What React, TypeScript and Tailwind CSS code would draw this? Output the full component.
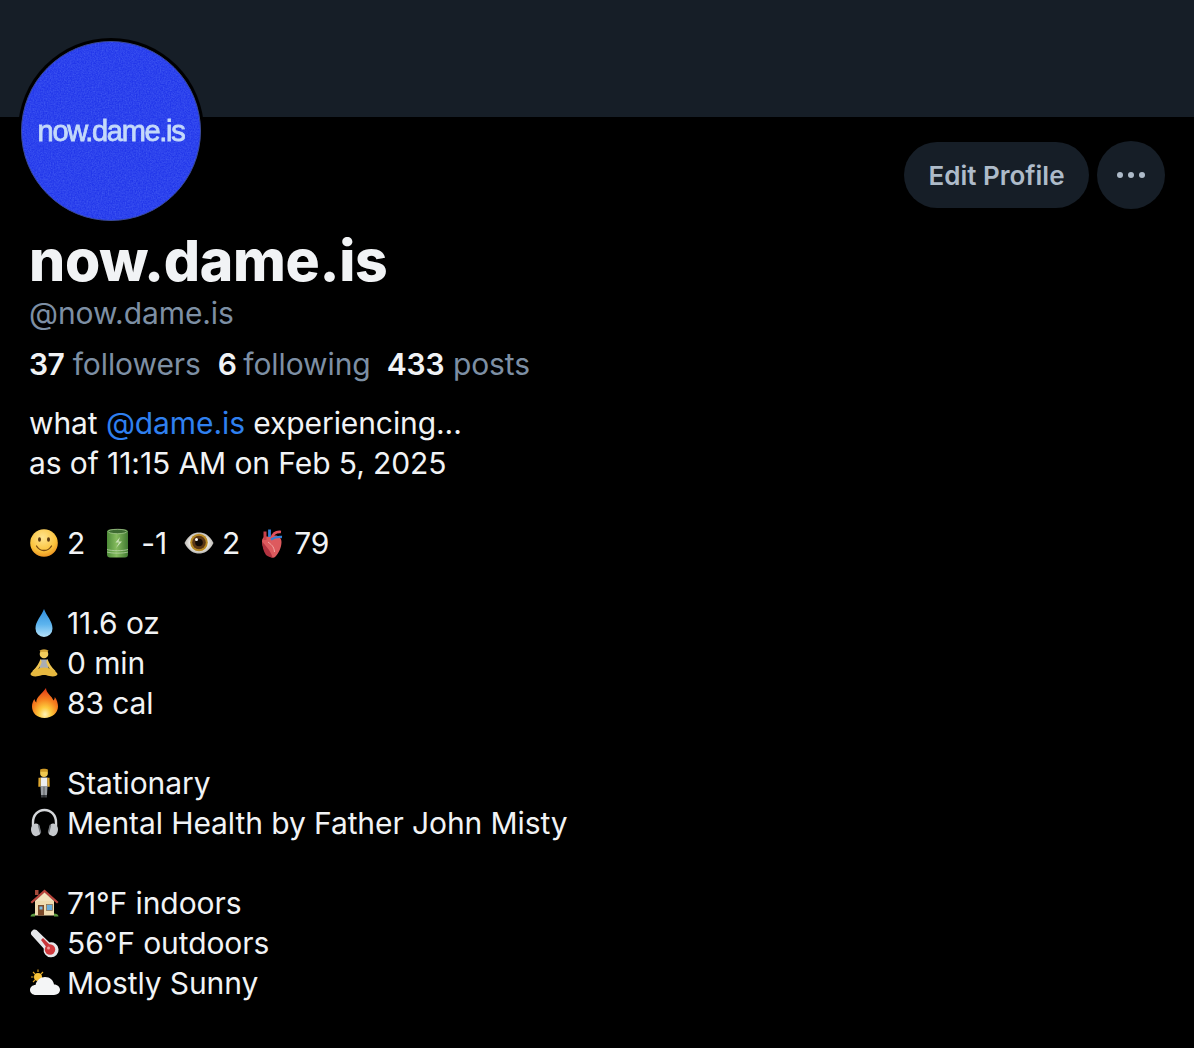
import * as React from 'react';

const Smile = () => (
  <svg viewBox="0 0 30 30" className="w-[30px] h-[30px]">
    <defs>
      <radialGradient id="smile" cx="45%" cy="30%" r="75%">
        <stop offset="0%" stopColor="#ffe48f" />
        <stop offset="65%" stopColor="#fbc33c" />
        <stop offset="100%" stopColor="#e98a1c" />
      </radialGradient>
    </defs>
    <circle cx="14" cy="15" r="13.800" fill="url(#smile)" />
    <ellipse cx="9.500" cy="11.500" rx="1.500" ry="2.200" fill="#5d3a12" />
    <ellipse cx="18.500" cy="11.500" rx="1.500" ry="2.200" fill="#5d3a12" />
    <path d="M6.500 18c2 3.500 4.800 4.500 7.500 4.500s5.500-1 7.500-4.500" fill="none" stroke="#7a4a12" strokeWidth="1.300" strokeLinecap="round" />
  </svg>
);

const Battery = () => (
  <svg viewBox="0 0 30 30" className="w-[30px] h-[30px]">
    <defs>
      <linearGradient id="batt" x1="0" x2="1" y1="0" y2="0">
        <stop offset="0%" stopColor="#4d8b38" />
        <stop offset="45%" stopColor="#85bb5e" />
        <stop offset="100%" stopColor="#427a32" />
      </linearGradient>
    </defs>
    <rect x="4" y="1.500" width="21" height="28" rx="3" fill="url(#batt)" />
    <ellipse cx="14.500" cy="3.500" rx="9.500" ry="2.200" fill="#3d6b31" stroke="#a5c98e" strokeWidth="0.800" />
    <path d="M17 9l-4.500 5.500h3.500l-3 5.500 6-6.500h-3.500z" fill="#d8eac8" opacity="0.850" />
    <path d="M4 21.500c4 1.500 17 1.500 21 0M4 24c4 1.500 17 1.500 21 0" fill="none" stroke="#c6dcb4" strokeWidth="0.700" />
  </svg>
);

const Eye = () => (
  <svg viewBox="0 0 30 30" className="w-[30px] h-[30px]">
    <defs>
      <radialGradient id="sclera" cx="50%" cy="50%" r="55%">
        <stop offset="55%" stopColor="#f3f1ec" />
        <stop offset="100%" stopColor="#a8a6a2" />
      </radialGradient>
    </defs>
    <path d="M0.500 15C5 6.500 10 4.500 15 4.500s10 2 14.500 10.500C25 23.500 20 25.500 15 25.500S5 23.500 0.500 15z" fill="url(#sclera)" />
    <circle cx="15" cy="14.500" r="8.800" fill="#b98a24" />
    <circle cx="15" cy="14.500" r="6.800" fill="#5a3716" />
    <circle cx="15" cy="14.500" r="3.800" fill="#120a05" />
    <circle cx="12.500" cy="11.500" r="1.500" fill="#ffffff" />
  </svg>
);

const Heart = () => (
  <svg viewBox="0 0 30 30" className="w-[30px] h-[30px]">
    <path d="M5 13c0-3 2.500-5 5-4.500 2 .4 4 .4 6-.5 4-1.500 8.500 1 8.500 6 0 5.500-3 11.500-6 14.500-1.500 1.500-3 1.500-5 .5C9 26.500 5 19 5 13z" fill="#dd5a5e" />
    <path d="M9 27c-2.500-3.500-4-9-3.500-13 3 4 8 8 10 15.500-2.500 0-4.500-1-6.500-2.500z" fill="#b23340" />
    <path d="M8 12V3.500" stroke="#c8404a" strokeWidth="3" />
    <path d="M12.500 9V1.500" stroke="#2f7fd6" strokeWidth="2.800" />
    <path d="M15 10c1-5 4-6.500 9-6" fill="none" stroke="#e0505c" strokeWidth="2.600" />
    <path d="M14 11.500c3-2 6-3 11-2.500" fill="none" stroke="#2f7fd6" strokeWidth="2.400" />
    <path d="M11 14c3 2.500 6 4 6.500 10" fill="none" stroke="#f3a8a4" strokeWidth="1" />
  </svg>
);

const Drop = () => (
  <svg viewBox="0 0 30 30" className="w-[30px] h-[30px]">
    <defs>
      <linearGradient id="drop" x1="0" x2="0" y1="0" y2="1">
        <stop offset="0%" stopColor="#2f8ede" />
        <stop offset="55%" stopColor="#5db4ee" />
        <stop offset="100%" stopColor="#b6e2f9" />
      </linearGradient>
    </defs>
    <path d="M14 1c2.500 7 8.500 12 8.500 19.500a8.500 8.500 0 0 1-17 0C5.500 13 11.500 8 14 1z" fill="url(#drop)" />
  </svg>
);

const Yoga = () => (
  <svg viewBox="0 0 30 30" className="w-[30px] h-[30px]">
    <circle cx="14" cy="6" r="4.300" fill="#f3cd5c" />
    <path d="M9.500 2.500c2-1.500 7-1.500 9 0l-1 1.500h-7z" fill="#d8a93a" />
    <path d="M10.500 11.500h7l1 8.500h-9z" fill="#a9adb3" />
    <path d="M10.500 11c-1.500 4-3.500 8-8 12l1.200 1.500c4.800-3 6.800-6 8-10.500zM17.500 11c1.500 4 3.500 8 8 12l-1.200 1.500c-4.800-3-6.800-6-8-10.500z" fill="#efc552" />
    <path d="M0.500 26c1-2.500 6-6.500 13.500-6.500S26.500 23.500 27.500 26c0 2-4 3-8 2-2-.5-4-1-5.500-1s-3.500.5-5.500 1c-4 1-8 0-8-2z" fill="#e6b83f" />
  </svg>
);

const Fire = () => (
  <svg viewBox="0 0 30 30" className="w-[30px] h-[30px]">
    <defs>
      <radialGradient id="flame" cx="50%" cy="88%" r="85%">
        <stop offset="0%" stopColor="#fff3b8" />
        <stop offset="28%" stopColor="#fdc93c" />
        <stop offset="60%" stopColor="#f6801e" />
        <stop offset="100%" stopColor="#e23a18" />
      </radialGradient>
    </defs>
    <path d="M16 0c0 5 6 8 7.500 12.500.8-1 1.300-2 1.300-3.500C27 12 28 15.500 28 18.500 28 25 22 30 14.500 30S2 25 2 18.500c0-3 1-5.500 2.500-7.500.3 1.500.7 2.500 1.800 3.500C6 9 12 6 16 0z" fill="url(#flame)" />
  </svg>
);

const Person = () => (
  <svg viewBox="0 0 30 30" className="w-[30px] h-[30px]">
    <circle cx="14" cy="5" r="3.900" fill="#f0c84f" />
    <path d="M10 1.800c2-1.300 6-1.300 8 0l-.5 2h-7z" fill="#cf9a26" />
    <path d="M10.500 9.500h7v9h-7z" fill="#eceef0" />
    <path d="M8.500 9.800h2.300l-.3 9H8.300zM17.200 9.800h2.300l.2 9h-2.200z" fill="#dea62e" />
    <path d="M10.500 18h3.300v9h-2.800zM14.200 18h3.300l-.5 9h-2.800z" fill="#9a9ea3" />
    <path d="M11 27h2.800v2.500H11zM14.200 27H17v2.500h-2.800z" fill="#3c3f43" />
  </svg>
);

const Headphones = () => (
  <svg viewBox="0 0 30 30" className="w-[30px] h-[30px]">
    <path d="M3 18v-3.500C3 7 8 2 14.500 2S26 7 26 14.500V18" fill="none" stroke="#d4d6d9" strokeWidth="2.400" />
    <path d="M1 21c0-3 2-5 4.500-5.500 1.500-.3 3 .5 3.500 2l1.500 6c.4 1.700-.5 3.200-2 3.800l-2.500.9C3 28 1 25 1 21z" fill="#c5c8cc" />
    <path d="M28 21c0-3-2-5-4.500-5.500-1.500-.3-3 .5-3.500 2l-1.500 6c-.4 1.700.5 3.200 2 3.800l2.500.9C26 28 28 25 28 21z" fill="#c5c8cc" />
    <path d="M8.500 17l2 7.500" stroke="#6f7378" strokeWidth="1.600" />
    <path d="M20.500 17l-2 7.500" stroke="#6f7378" strokeWidth="1.600" />
  </svg>
);

const House = () => (
  <svg viewBox="0 0 30 30" className="w-[30px] h-[30px]">
    <path d="M5 13h19v14.500H5z" fill="#f0dcb0" />
    <path d="M5 2h3.500v5H5z" fill="#a44a3a" />
    <path d="M14.500 1.500L0.500 14l1.500 1.500L14.500 5l12.500 10.500 1.500-1.500z" fill="#b8443c" />
    <path d="M14.500 4.500L5 13h19z" fill="#f3e2bd" />
    <path d="M8 17h6v10.500H8z" fill="#7c4a2a" />
    <rect x="9.500" y="18.500" width="3" height="3" fill="#7cb8e0" />
    <rect x="16.500" y="16.500" width="6" height="6" fill="#6aaedc" stroke="#8b6a48" strokeWidth="0.700" />
    <path d="M0.500 28.500c0-2 2-3 4.500-3v3zM28.500 28.500c0-2-2-3-4.500-3v3z" fill="#5c9a3f" />
  </svg>
);

const Thermometer = () => (
  <svg viewBox="0 0 30 30" className="w-[30px] h-[30px]">
    <path d="M1.500 3.500C3 1 5 1 6.500 2l13 12.500a7.500 7.500 0 1 1-5.800 6L1.500 7c-.8-1-.8-2.500 0-3.500z" fill="#e6e7ea" />
    <path d="M11 12l2-2 7 7-3 3z" fill="#c9363a" />
    <circle cx="20" cy="21.500" r="5.200" fill="#d13a3e" />
    <circle cx="18.500" cy="20" r="1.500" fill="#f39a9a" />
  </svg>
);

const Cloud = () => (
  <svg viewBox="0 0 30 30" className="w-[30px] h-[30px]">
    <circle cx="8" cy="9" r="4" fill="#f8c33a" />
    <path d="M8 1.500V4M1 9h2.500M3 4l2 2M13 4l-2 2M3 14l2-2" stroke="#e0a526" strokeWidth="1.100" />
    <path d="M6 27c-3.500 0-6-2.300-6-5s2.300-5 5.500-5c1-4.500 5-8 9.500-8 5 0 8.500 3.500 9 7.500 3.500 0 6 2.500 6 5.300S27.500 27 24 27z" fill="#f4f5f6" />
  </svg>
);

const Avatar = () => (
  <div className="absolute left-[18px] top-[38px] w-[186px] h-[186px] rounded-full bg-black p-[3px]">
    <div className="relative w-full h-full rounded-full overflow-hidden bg-[#2237ea] border border-[#3a4a9a]">
      <svg className="absolute inset-0 w-full h-full opacity-50" viewBox="0 0 180 180">
        <filter id="grain">
          <feTurbulence type="fractalNoise" baseFrequency="0.7" numOctaves="2" seed="4" />
          <feColorMatrix values="0 0 0 0 0.15  0 0 0 0 0.25  0 0 0 0 1  0 0 0 1.200 -0.300" />
        </filter>
        <rect width="180" height="180" filter="url(#grain)" />
      </svg>
      <div className="absolute inset-0 flex items-center justify-center">
        <span className="font-['Liberation_Sans',sans-serif] text-[29px] leading-none tracking-[-1.300px] text-[#c4d9fa] blur-[0.5px] [-webkit-text-stroke:0.8px_#c4d9fa]">
          now.dame.is
        </span>
      </div>
    </div>
  </div>
);

const Line = ({ icon, children }: { icon: React.ReactNode; children: React.ReactNode }) => (
  <div className="flex items-center h-10 gap-[7px]">
    <span className="shrink-0 ml-px w-[30px] h-[30px]">{icon}</span>
    <span>{children}</span>
  </div>
);

const Stat = ({ icon, value, className }: { icon: React.ReactNode; value: string; className: string }) => (
  <span className={`flex items-center ${className}`}>
    <span className="shrink-0 ml-px w-[30px] h-[30px]">{icon}</span>
    <span>{value}</span>
  </span>
);

const App = () => {
  return (
    <div className="relative w-[1194px] h-[1048px] overflow-hidden bg-black font-['Inter',sans-serif]">
      <div className="h-[117px] bg-[#161e27]" />
      <Avatar />

      <div className="flex justify-end items-center gap-2 pr-[29px] pt-6 h-[92px]">
        <button className="h-[66px] w-[185px] rounded-full bg-[#161e27] text-[#aebbc9] text-[26px] font-semibold">
          Edit Profile
        </button>
        <button className="h-[68px] w-[68px] rounded-full bg-[#161e27] flex items-center justify-center gap-[5px]">
          <span className="w-[6px] h-[6px] rounded-full bg-[#aebbc9]" />
          <span className="w-[6px] h-[6px] rounded-full bg-[#aebbc9]" />
          <span className="w-[6px] h-[6px] rounded-full bg-[#aebbc9]" />
        </button>
      </div>

      <div className="pl-[29px] pr-[30px] text-[#f1f3f5] text-[30px] leading-10 tracking-[-0.09px]">
        <h1 className="mt-[16px] h-[71px] text-[57px] leading-[71px] font-extrabold tracking-[-0.3px] text-[#f1f3f5]">
          now.dame.is
        </h1>
        <div className="h-[34px] text-[#7d8fa4] text-[30px] leading-[34px]">@now.dame.is</div>
        <div className="mt-[14px] flex">
          <span className="mr-[17px]">
            <b className="font-semibold tracking-[-0.5px]">37</b> <span className="text-[#7d8fa4]">followers</span>
          </span>
          <span className="mr-4">
            <b className="font-semibold tracking-[-2px]">6</b> <span className="text-[#7d8fa4]">following</span>
          </span>
          <span>
            <b className="font-semibold">433</b> <span className="text-[#7d8fa4]">posts</span>
          </span>
        </div>

        <div className="mt-[19px]">
          <div>
            what <span className="text-[#2f80f0]">@dame.is</span> experiencing...
          </div>
          <div>as of 11:15 AM on Feb 5, 2025</div>
          <div className="h-10" />
          <div className="flex items-center h-10">
            <Stat icon={<Smile />} value="2" className="gap-[7px]" />
            <Stat icon={<Battery />} value="-1" className="gap-2 ml-[17px]" />
            <Stat icon={<Eye />} value="2" className="gap-2 ml-4" />
            <Stat icon={<Heart />} value="79" className="gap-[7px] ml-4" />
          </div>
          <div className="h-10" />
          <Line icon={<Drop />}>11.6 oz</Line>
          <Line icon={<Yoga />}>0 min</Line>
          <Line icon={<Fire />}>83 cal</Line>
          <div className="h-10" />
          <Line icon={<Person />}>Stationary</Line>
          <Line icon={<Headphones />}>Mental Health by Father John Misty</Line>
          <div className="h-10" />
          <Line icon={<House />}>71°F indoors</Line>
          <Line icon={<Thermometer />}>56°F outdoors</Line>
          <Line icon={<Cloud />}>Mostly Sunny</Line>
        </div>
      </div>
    </div>
  );
};

export default App;
